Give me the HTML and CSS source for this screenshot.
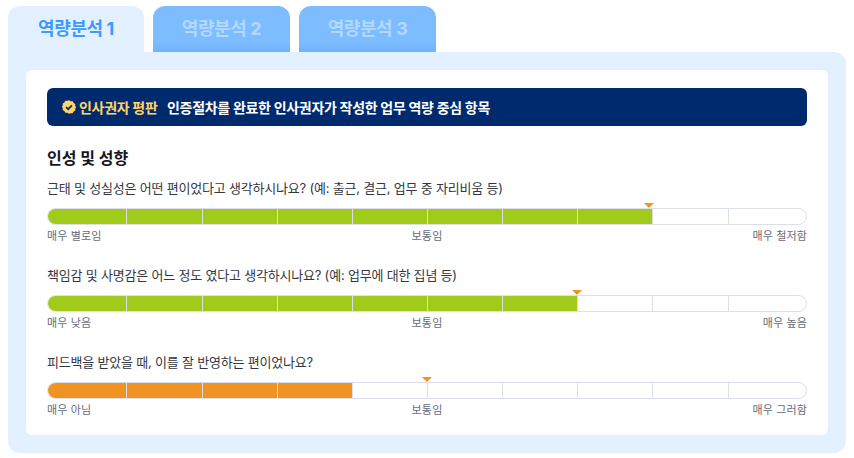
FILE: index.html
```html
<!DOCTYPE html>
<html lang="ko">
<head>
<meta charset="utf-8">
<title>역량분석</title>
<link rel="stylesheet" href="styles.css">
</head>
<body>
<main class="page">
  <nav class="tabs">
    <div class="tab tab-active">역량분석 1</div>
    <div class="tab">역량분석 2</div>
    <div class="tab">역량분석 3</div>
  </nav>
  <section class="panel">
    <div class="card">
      <div class="banner">
        <svg class="banner-icon" viewBox="0 0 14 14" aria-hidden="true">
          <path fill="#ffd666" d="M7 0.3l1.7 1 2-.1.9 1.7 1.7 1-.1 2 1 1.1-1 1.7.1 1.9-1.7 1-.9 1.7-2-.1L7 13.7l-1.7-1-2 .1-.9-1.7-1.7-1 .1-1.9-1-1.7 1-1.1-.1-2 1.7-1 .9-1.7 2 .1z"/>
          <path fill="none" stroke="#002a6e" stroke-width="1.7" d="M4.1 7.1l2.1 2.1 3.7-3.9"/>
        </svg>
        <strong class="banner-label">인사권자 평판</strong>
        <span class="banner-text">인증절차를 완료한 인사권자가 작성한 업무 역량 중심 항목</span>
      </div>
      <h2 class="section-title">인성 및 성향</h2>

      <div class="item">
        <p class="question">근태 및 성실성은 어떤 편이었다고 생각하시나요? (예: 출근, 결근, 업무 중 자리비움 등)</p>
        <div class="meter">
          <span class="marker" style="left:597px"></span>
          <div class="bar">
            <i class="cell green"></i><i class="cell green"></i><i class="cell green"></i><i class="cell green"></i><i class="cell green"></i><i class="cell green"></i><i class="cell green"></i><i class="cell green"></i><i class="cell"></i><i class="cell"></i>
          </div>
        </div>
        <div class="scale"><span>매우 별로임</span><span class="mid">보통임</span><span>매우 철저함</span></div>
      </div>

      <div class="item">
        <p class="question">책임감 및 사명감은 어느 정도 였다고 생각하시나요? (예: 업무에 대한 집념 등)</p>
        <div class="meter">
          <span class="marker" style="left:524.5px"></span>
          <div class="bar">
            <i class="cell green"></i><i class="cell green"></i><i class="cell green"></i><i class="cell green"></i><i class="cell green"></i><i class="cell green"></i><i class="cell green"></i><i class="cell"></i><i class="cell"></i><i class="cell"></i>
          </div>
        </div>
        <div class="scale"><span>매우 낮음</span><span class="mid">보통임</span><span>매우 높음</span></div>
      </div>

      <div class="item">
        <p class="question">피드백을 받았을 때, 이를 잘 반영하는 편이었나요?</p>
        <div class="meter">
          <span class="marker" style="left:374.5px"></span>
          <div class="bar">
            <i class="cell orange"></i><i class="cell orange"></i><i class="cell orange"></i><i class="cell orange"></i><i class="cell"></i><i class="cell"></i><i class="cell"></i><i class="cell"></i><i class="cell"></i><i class="cell"></i>
          </div>
        </div>
        <div class="scale"><span>매우 아님</span><span class="mid">보통임</span><span>매우 그러함</span></div>
      </div>
    </div>
  </section>
</main>
</body>
</html>
```

FILE: styles.css
```css
* { box-sizing: border-box; }
html, body { margin: 0; padding: 0; background: #fff; }
body {
  width: 854px;
  height: 458px;
  overflow: hidden;
  font-family: Inter, "Noto Sans CJK KR", sans-serif;
  color: #16181d;
}
.page { padding: 6px 8px 0; }
.tabs { display: flex; gap: 9px; height: 46px; }
.tab {
  width: 137px;
  border-radius: 12px 12px 0 0;
  padding-top: 11px;
  text-align: center;
  font-size: 18px;
  line-height: 24px;
  font-weight: 700;
  letter-spacing: -0.4px;
  color: #b3d9ff;
  background: linear-gradient(#7dbcff 0, #7dbcff 36px, #6fb2fb 46px);
}
.tab-active { width: 136px; color: #3d9bff; background: #e2f0ff; }
.panel {
  background: #e2f0ff;
  border-radius: 0 12px 12px 12px;
  padding: 18px;
  height: 401px;
}
.card {
  background: #fff;
  border-radius: 6px;
  height: 365px;
  padding: 18px 21px;
}
.banner {
  display: flex;
  align-items: center;
  height: 38px;
  padding-left: 15px;
  border-radius: 6px;
  background: #002a6e;
  font-size: 14px;
  letter-spacing: -0.3px;
  font-weight: 700;
}
.banner-icon { width: 14px; height: 14px; margin-right: 3px; flex: none; }
.banner-label { color: #ffd666; margin-right: 9.5px; font-weight: 700; }
.banner-text { color: #fff; }
.section-title {
  margin: 20px 0 0;
  font-size: 16px;
  line-height: 24px;
  font-weight: 700;
  color: #16181d;
}
.item { margin-top: 8px; }
.item + .item { margin-top: 20px; }
.question {
  margin: 0;
  font-size: 13px;
  letter-spacing: -0.2px;
  line-height: 20px;
  color: #33373f;
}
.meter { position: relative; margin-top: 10px; }
.marker {
  position: absolute;
  top: -5px;
  width: 0;
  height: 0;
  border-left: 5.5px solid transparent;
  border-right: 5.5px solid transparent;
  border-top: 5.5px solid #ef9423;
}
.bar {
  display: flex;
  height: 17px;
  border: 1px solid #dcdfe8;
  border-radius: 9px;
  overflow: hidden;
  background: #fff;
}
.cell {
  display: block;
  flex: 0 0 75.15px;
  margin-top: -1px;
  margin-bottom: -1px;
  border-right: 1px solid #dcdfe8;
}
.cell:first-child { flex-basis: 79.4px; }
.cell:last-child { flex: 1 1 auto; border-right: 0; }
.green { background: #a0cb1a; }
.orange { background: #ef9423; }
.scale {
  display: grid;
  grid-template-columns: 1fr auto 1fr;
  margin-top: 2px;
  font-size: 11px;
  letter-spacing: 0.15px;
  line-height: 18px;
  color: #666b78;
}
.scale span:last-child { text-align: right; }
.mid { text-align: center; }
```
